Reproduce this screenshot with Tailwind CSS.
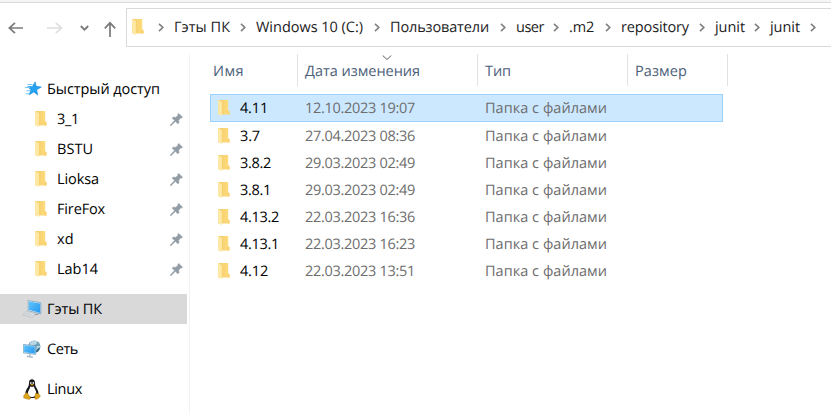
<!DOCTYPE html>
<html lang="be">
<head>
<meta charset="utf-8">
<title>junit</title>
<script src="https://cdn.jsdelivr.net/npm/@tailwindcss/browser@4"></script>
</head>
<body class="h-[414px] w-[831px] overflow-hidden bg-white font-['Open_Sans','Noto_Sans',sans-serif] text-[14.5px] leading-5 text-black [text-rendering:geometricPrecision]">
<svg class="absolute h-0 w-0">
  <defs>
    <linearGradient id="fg" x1="0" x2="1"><stop offset="0" stop-color="#f2cd6c"/><stop offset="1" stop-color="#ffdc7d"/></linearGradient>
    <linearGradient id="scr" x1="0" y1="0" x2="1" y2="1"><stop offset="0" stop-color="#62c4ff"/><stop offset="1" stop-color="#2498ee"/></linearGradient>
    <symbol id="folder" viewBox="0 0 12 18"><path d="M.3 1h9.9v10.2l1.3 1v3.4H.3z" fill="url(#fg)"/><path d="M.2 1 3.8 3.2v14L.2 14.9z" fill="#ffe9a6"/><path d="M9.4 11.5h1.1l1 .9v3.2H9.4z" fill="#f7d277"/></symbol>
    <symbol id="pin" viewBox="0 0 13 13"><path d="M8.7.5 12.5 4.2 11.3 5 10.7 4.8 8.6 7.2 8.9 9.8 7.9 10.8 5.4 8.3 1.1 12.4.4 12.6.6 11.8 4.7 7.5 2.2 5.1 3.2 4.2 5.8 4.4 8.2 2.3 7.9 1.4z" fill="#929ca5" stroke="#929ca5" stroke-width=".7"/></symbol>
    <symbol id="chev" viewBox="0 0 6 9"><path d="M1 .8 4.8 4.5 1 8.2" fill="none" stroke="#818181" stroke-width="1.7"/></symbol>
  </defs>
</svg>
<div class="h-[3px] border-b border-[#d9dbdd] bg-[#f4f5f7]"></div>
<header class="flex h-[51px] pt-[5px]">
  <nav class="flex w-[126px] shrink-0 pt-[10px]">
    <svg class="ml-2 h-[18px] w-4" viewBox="0 0 16 18" fill="none" stroke="#7b7b7b" stroke-width="1.7"><path d="M15 10H1.2M7 4.8 1.3 10 7 15.2"/></svg>
    <svg class="ml-[23px] h-[18px] w-4" viewBox="0 0 16 18" fill="none" stroke="#dedede" stroke-width="1.6"><path d="M0 10h14M8.8 4.8 14.5 10l-5.7 5.2"/></svg>
    <svg class="ml-[17px] h-[18px] w-[9px]" viewBox="0 0 9 18" fill="none" stroke="#7b7b7b" stroke-width="1.8"><path d="m.8 8 3.7 3.7L8.2 8"/></svg>
    <svg class="ml-[15px] h-[20px] w-[12px]" viewBox="0 0 12 20" fill="none" stroke="#7b7b7b" stroke-width="1.7"><path d="M6 19V4.8M.8 10.3 6 4.8l5.2 5.5"/></svg>
  </nav>
  <div class="flex h-[39px] flex-1 items-center border-y border-l border-[#d9d9d9] pb-px">
    <svg class="ml-[5px] h-[18px] w-[12px] shrink-0"><use href="#folder"/></svg>
    <svg class="ml-[14px] mr-[10px] h-[9px] w-[6px] shrink-0"><use href="#chev"/></svg>
    <div id="crumbs" class="flex items-center whitespace-nowrap text-[#1c1c1c]"></div>
  </div>
</header>
<main class="flex h-[360px]">
  <aside class="w-[190px] shrink-0 border-r border-[#f3f3f3] pt-[20px]">
    <div class="flex h-[30px] items-center">
      <svg class="ml-[25px] h-4 w-[17px]" viewBox="0 0 17 16"><path d="m10.2.9.9 4.4 5.2.7-4.6 2.8 1 5.3-3.9-3.2-4.7 3 1.8-5.2-3.4-3 5-.3z" fill="#26a2f2" stroke="#168bdc" stroke-width=".6"/><path d="M2.5 3.5h5M0 6.5h5M1.5 9.7h4M.5 12.8h4" stroke="#75c8fa"/></svg>
      <span data-w="112" class="ml-[5px] pt-[2px]">Быстрый доступ</span>
    </div>
    <div id="pins"></div>
    <div class="mt-[10px] flex h-[30px] w-[187px] items-center bg-[#d9d9d9]">
      <svg class="ml-[22px] h-[18px] w-5" viewBox="0 0 20 18"><path d="m6.2.6 12.6 2.2v11.1L6.2 10.5z" fill="#edf7fc" stroke="#4f89ad" stroke-width=".6"/><path d="M6.9 1.4 18.2 3.4v9.5L6.9 9.8z" fill="url(#scr)"/><path d="m4.2 11.5 9 2.3-3.1 3.5L.5 14.8z" fill="#f0f2f4" stroke="#a9b2ba" stroke-width=".6"/><path d="m3.3 12.9 8.7 2.3M2.1 13.9l8.8 2.2M6 12l-3 3.2m6-2.4-3 3.2" stroke="#a9b2ba" stroke-width=".5"/><path d="m13.2 14.8 3.4-1" stroke="#83919c"/></svg>
      <span data-w="54" class="ml-[5px] pt-[2px]">Гэты ПК</span>
    </div>
    <div class="mt-[10px] flex h-[30px] items-center">
      <svg class="ml-[23px] h-[18px] w-[18px]" viewBox="0 0 18 18"><circle cx="11.3" cy="6.6" r="6.1" fill="#6f9eb7"/><path d="M7 2.8c2-2 5.5-2.7 7.4-.9L13 4.4l-3 .8-.8 2.2-2.5-.9zM13.5 6.2l3.8-.5c.2 2-.4 4-1.8 5.3l-2.2-1.6z" fill="#b9d8e4"/><path d="M12.4 12 15 8.2l2-1c-.3 3-1.9 5-4.6 5.4z" fill="#346885"/><path d="m.7 4.8 11.6 1.5v7.8L.7 12.5z" fill="url(#scr)" stroke="#d4edf8" stroke-width=".8"/><path d="m.3 4.4 12.4 1.5v8.6L.3 12.9z" fill="none" stroke="#3b7ba1" stroke-width=".5"/><path d="M6.9 14v2.2m-3 0 6 1" stroke="#a9bbc6" stroke-width="1.4"/></svg>
      <span data-w="30" class="ml-[6px] pt-[2px]">Сеть</span>
    </div>
    <div class="mt-[10px] flex h-[30px] items-center">
      <svg class="ml-[23px] h-[21px] w-[18px]" viewBox="0 0 18 21"><path d="M6 3.8C6 1.4 7.2.3 9 .3s3 1.2 3 3.5c0 3.5 1 4.2 2.6 7.1 1 2 1.3 4 .2 6.1L12.5 19H5.7L3 17c-1-2-.7-4.3.4-6.3C4.9 7.9 6 7.3 6 3.8z" fill="#171717"/><path d="M7.4 7.3c1.1.8 2.2.8 3.3 0 1 3 2.8 4.5 2.5 7.2-.2 1.8-1.2 3.5-4.2 3.5s-4.2-1.5-4.2-3.5c0-2.4 1.8-3.8 2.6-7.2z" fill="#fff"/><circle cx="7.8" cy="4" r=".9" fill="#ddd"/><circle cx="10.3" cy="4" r=".9" fill="#ddd"/><path d="m7.2 5.5 1.8-.8 1.9.8-1.9 1.3z" fill="#d99b13"/><path d="m2.9 13.8 1.4.1 3.1 4.5c.4 1.5-.6 2.3-2.4 1.8L.9 19.1c-.6-.5 0-1.8-.1-2.8.8-.6 1.6-.7 2.1-2.5zM12.3 14.8l.6-.7 1 .9 1.6-.9c.6 1.8 1 2 1.9 2.8-.1 1.2-1.6 1.8-3.1 3-1.1.8-2.6.3-2.6-1.2z" fill="#dda51c" stroke="#9a6b10" stroke-width=".4"/></svg>
      <span data-w="34" class="ml-[6px] pt-[2px]">Linux</span>
    </div>
  </aside>
  <section class="flex-1 pl-5">
    <div class="grid h-8 w-[518px] grid-cols-[88px_180px_150px_100px] text-[#4c607a]">
      <div class="flex items-center border-r border-[#e2e2e2] pl-[3px] pt-[4px]"><span data-w="30">Имя</span></div>
      <div class="relative flex items-center border-r border-[#e2e2e2] pl-[7px] pt-[4px]"><span data-w="114">Дата изменения</span><svg class="absolute left-[84px] top-px h-[6px] w-[10px]" viewBox="0 0 10 6" fill="none" stroke="#606060"><path d="m.7.5 4.3 4 4.3-4"/></svg></div>
      <div class="flex items-center border-r border-[#e2e2e2] pl-[7px] pt-[4px]"><span data-w="25">Тип</span></div>
      <div class="flex items-center border-r border-[#e2e2e2] pl-[7px] pt-[4px]"><span data-w="51">Размер</span></div>
    </div>
    <div id="files" class="pt-2"></div>
  </section>
</main>
<script>
const folder = '<svg class="h-[18px] w-[12px] shrink-0"><use href="#folder"/></svg>';
// name, text width, distance to the next crumb
const crumbs = [['Гэты ПК',55,82],['Windows 10 (C:)',106,134],['Пользователи',98,126],['user',27,53],['.m2',24,52],['repository',67,94],['junit',29,55],['junit',29,56]];
document.getElementById('crumbs').innerHTML = crumbs.map(([t,w,n]) =>
  `<div class="flex items-center justify-between pr-[10px]" style="width:${n}px"><span class="pt-px" data-w="${w}">${t}</span><svg class="h-[9px] w-[6px] shrink-0"><use href="#chev"/></svg></div>`).join('');
const pins = [['3_1',21],['BSTU',35],['Lioksa',41],['FireFox',47],['xd',16],['Lab14',40]];
document.getElementById('pins').innerHTML = pins.map(([t,w]) =>
  `<div class="flex h-[30px] items-center pl-[35px]">${folder}<div class="ml-[10px] w-[113px] pt-[2px]"><span data-w="${w}">${t}</span></div><svg class="h-[13px] w-[13px]"><use href="#pin"/></svg></div>`).join('');
const files = [['4.11',27,'12.10.2023 19:07'],['3.7',19,'27.04.2023 08:36'],['3.8.2',30,'29.03.2023 02:49'],['3.8.1',30,'29.03.2023 02:49'],['4.13.2',38,'22.03.2023 16:36'],['4.13.1',38,'22.03.2023 16:23'],['4.12',27,'22.03.2023 13:51']];
document.getElementById('files').innerHTML = files.map(([t,w,d],i) =>
  `<div class="${i ? 'h-[27px] border-transparent' : 'h-[28px] border-[#99d1ff] bg-[#cce8ff]'} grid w-[513px] grid-cols-[22px_65px_180px_1fr] items-center border-x border-t ${i ? '' : 'border-b'} pl-[7px] text-[#6d6d6d]">${folder}<div class="pt-[2px] text-black"><span data-w="${w}">${t}</span></div><div class="pt-[2px]"><span data-w="109">${d}</span></div><div class="pt-[2px]"><span data-w="121">Папка с файлами</span></div></div>`).join('');
function fit() {
  for (const s of document.querySelectorAll('[data-w]')) {
    s.style.whiteSpace = 'nowrap';
    s.style.letterSpacing = '0px';
    const r = document.createRange();
    r.selectNodeContents(s);
    let sp = 0;
    for (let k = 0; k < 3; k++) {
      sp += (+s.dataset.w + 1 - r.getBoundingClientRect().width) / s.textContent.length;
      s.style.letterSpacing = sp + 'px';
    }
  }
}
fit();
addEventListener('load', fit);
document.fonts.ready.then(fit);
</script>
</body>
</html>
